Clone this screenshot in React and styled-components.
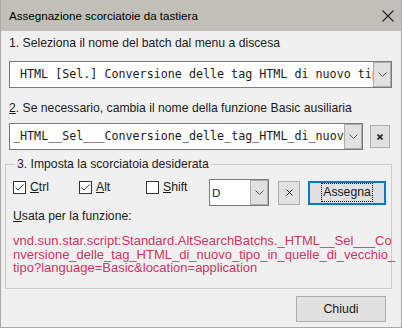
import React from "react";
import styled, { createGlobalStyle } from "styled-components";

const GlobalStyle = createGlobalStyle`
    html, body {
        margin: 0;
        padding: 0;
        background: #f0f0f0;
    }
    body {
        font-family: "Liberation Sans", Arial, sans-serif;
        color: #1a1a1a;
    }
`

const Window = styled.div`
    width: 402px;
    height: 328px;
    box-sizing: border-box;
    border: 1px solid #a8a8a8;
    border-top: none;
    background: #f0f0f0;
    display: flex;
    flex-direction: column;
`
const TitleBar = styled.div`
    height: 31px;
    flex-shrink: 0;
    background: #c0bfb8;
    display: flex;
    align-items: center;
    justify-content: space-between;
    padding: 0 7px 0 8px;
    font-size: 11.6px;
    color: #000;
`
const Content = styled.div`
    flex: 1;
    display: flex;
    flex-direction: column;
    padding: 0 7px 0 8px;
`
const Label = styled.div`
    font-size: 12.2px;
    line-height: 15px;
    margin-top: ${p => p.$top || 0}px;
    white-space: nowrap;
`
const Combo = styled.div`
    display: flex;
    flex-shrink: 0;
    width: ${p => p.$w}px;
    height: ${p => p.$h || 27}px;
    box-sizing: border-box;
    border: 1px solid #7a7a7a;
    background: #fff;
    margin-top: ${p => p.$top || 0}px;
`
const ComboText = styled.div`
    flex: 1;
    overflow: hidden;
    white-space: nowrap;
    font-family: ${p => p.$mono ? '"DejaVu Sans Mono", "Liberation Mono", monospace' : '"Liberation Sans", Arial, sans-serif'};
    font-size: ${p => p.$mono ? "11.7px" : "11.6px"};
    line-height: 25px;
    padding-left: ${p => p.$pad}px;
    color: #1a1a1a;
`
const DropButton = styled.div`
    width: 18px;
    flex-shrink: 0;
    box-sizing: border-box;
    border: 1px solid #adadad;
    background: #e1e1e1;
    display: flex;
    align-items: center;
    justify-content: center;
`
const Row = styled.div`
    display: flex;
    align-items: center;
    gap: 7px;
    margin-top: ${p => p.$top || 0}px;
`
const SmallButton = styled.div`
    width: ${p => p.$w}px;
    height: ${p => p.$h}px;
    box-sizing: border-box;
    border: 1px solid #adadad;
    background: #e1e1e1;
    display: flex;
    align-items: center;
    justify-content: center;
    margin-left: ${p => p.$left || 0}px;
    align-self: center;
    flex-shrink: 0;
`
const Group = styled.fieldset`
    margin: 7px 0 0 -4px;
    padding: 0 4px 13px 7px;
    width: 387px;
    box-sizing: border-box;
    min-width: 0;
    border: 1px solid #cbcbcb;
`
const Legend = styled.legend`
    margin-left: 2px;
    padding: 0 2px;
    font-size: 12.2px;
    line-height: 15px;
`
const KeyRow = styled.div`
    display: flex;
    align-items: flex-start;
    margin-top: 7px;
`
const CheckItem = styled.div`
    width: ${p => p.$w}px;
    display: flex;
    align-items: center;
    gap: 4px;
    margin-top: 2px;
    font-size: 12.2px;
    line-height: 13px;
`
const Box = styled.div`
    width: 13px;
    height: 13px;
    box-sizing: border-box;
    border: 1px solid #333;
    background: #fff;
    display: flex;
`
const AssignButton = styled.div`
    width: 78px;
    height: 24px;
    box-sizing: border-box;
    border: 2px solid #0078d7;
    background: #e1e1e1;
    display: flex;
    align-items: center;
    justify-content: center;
    margin-left: 8px;
    align-self: center;
    font-size: 12.2px;
    span {
        outline: 1px dotted #000;
        padding: 1px 1px 2px;
        line-height: 14px;
    }
`
const RedText = styled.div`
    margin-top: 10px;
    font-size: 13px;
    line-height: 13.5px;
    color: #d73263;
    div {
        white-space: nowrap;
    }
`
const Footer = styled.div`
    display: flex;
    justify-content: flex-end;
    margin-top: 7px;
    padding-right: 8px;
`
const Button = styled.div`
    width: 90px;
    height: 26px;
    box-sizing: border-box;
    border: 1px solid #adadad;
    background: #e1e1e1;
    display: flex;
    align-items: center;
    justify-content: center;
    font-size: 12.4px;
`

const Chevron = () => (
    <svg width="9" height="5" viewBox="0 0 9 5">
        <path d="M0.5 0.5 L4.5 4.5 L8.5 0.5" fill="none" stroke="#555" strokeWidth="1" />
    </svg>
)
const Cross = ({ size, weight }) => (
    <svg width={size} height={size} viewBox={`0 0 ${size} ${size}`}>
        <path d={`M0.5 0.5 L${size - 0.5} ${size - 0.5} M${size - 0.5} 0.5 L0.5 ${size - 0.5}`} fill="none" stroke="#222" strokeWidth={weight} />
    </svg>
)
const Check = ({ checked, children, w }) => (
    <CheckItem $w={w}>
        <Box>
            {checked && (
                <svg width="11" height="11" viewBox="0 0 11 11">
                    <path d="M1.5 5.5 L4 8 L9.5 2.5" fill="none" stroke="#333" strokeWidth="1" />
                </svg>
            )}
        </Box>
        <span>{children}</span>
    </CheckItem>
)

const App = () => {
    return (
        <>
            <GlobalStyle />
            <Window>
                <TitleBar>
                    <span>Assegnazione scorciatoie da tastiera</span>
                    <Cross size={12} weight={1.1} />
                </TitleBar>
                <Content>
                    <Label $top={5}>1. Seleziona il nome del batch dal menu a discesa</Label>
                    <Combo $w={383} $top={10}>
                        <ComboText $mono $pad={10}>HTML [Sel.] Conversione delle tag HTML di nuovo tipo in quelle di vecchio tipo</ComboText>
                        <DropButton><Chevron /></DropButton>
                    </Combo>
                    <Label $top={13}><u>2</u>. Se necessario, cambia il nome della funzione Basic ausiliaria</Label>
                    <Row $top={7}>
                        <Combo $w={354}>
                            <ComboText $mono $pad={3}>_HTML__Sel___Conversione_delle_tag_HTML_di_nuovo_tipo</ComboText>
                            <DropButton><Chevron /></DropButton>
                        </Combo>
                        <SmallButton $w={20} $h={23}><Cross size={6} weight={1.6} /></SmallButton>
                    </Row>
                    <Group>
                        <Legend>3. Imposta la scorciatoia desiderata</Legend>
                        <KeyRow>
                            <Check checked w={66}><u>C</u>trl</Check>
                            <Check checked w={67}><u>A</u>lt</Check>
                            <Check w={63}><u>S</u>hift</Check>
                            <Combo $w={60}>
                                <ComboText $pad={2}>D</ComboText>
                                <DropButton><Chevron /></DropButton>
                            </Combo>
                            <SmallButton $w={22} $h={24} $left={9}><Cross size={7} weight={1} /></SmallButton>
                            <AssignButton><span>Asse<u>g</u>na</span></AssignButton>
                        </KeyRow>
                        <Label $top={3}><u>U</u>sata per la funzione:</Label>
                        <RedText>
                            <div>vnd.sun.star.script:Standard.AltSearchBatchs._HTML__Sel___Co</div>
                            <div>nversione_delle_tag_HTML_di_nuovo_tipo_in_quelle_di_vecchio_</div>
                            <div>tipo?language=Basic&amp;location=application</div>
                        </RedText>
                    </Group>
                    <Footer>
                        <Button>Chiudi</Button>
                    </Footer>
                </Content>
            </Window>
        </>
    )
}

export default App
